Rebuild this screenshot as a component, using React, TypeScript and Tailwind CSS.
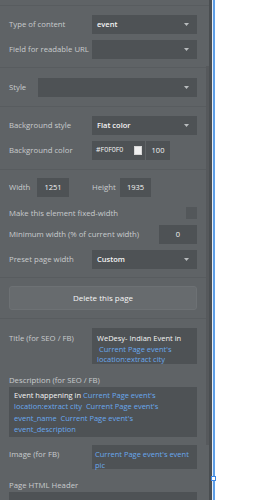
import React from 'react'

function Arrow() {
  return (
    <svg width="5" height="3" viewBox="0 0 5 3" className="shrink-0">
      <path d="M0 0 H5 L2.5 3 Z" fill="#b9bcbe" />
    </svg>
  )
}

function Select({ value, className = '' }: { value?: string; className?: string }) {
  return (
    <div className={`flex h-[19px] items-center justify-between bg-[#4e5255] pl-[5px] pr-[8px] ${className}`}>
      <span className="text-[7.5px] font-semibold text-[#f4f4f4]">{value}</span>
      <Arrow />
    </div>
  )
}

function Label({ children, className = '' }: { children: React.ReactNode; className?: string }) {
  return <span className={`whitespace-nowrap text-[7.75px] leading-[11px] text-[#c8cbcd] ${className}`}>{children}</span>
}

function Row({ label, children }: { label: string; children: React.ReactNode }) {
  return (
    <div className="flex h-[19px] items-center">
      <Label className="w-[83px] shrink-0">{label}</Label>
      <div className="flex-1">{children}</div>
    </div>
  )
}

const blue = 'text-[#69a8ee]'

export default function App() {
  return (
    <div className="flex h-[500px] w-[270px] overflow-hidden bg-white font-['Open_Sans',sans-serif]">
      {/* Property panel */}
      <div className="relative flex w-[209px] shrink-0 flex-col bg-[#5f6366]">
        {/* scrollbar */}
        <div className="absolute right-0 top-[66px] h-[379px] w-[3px] bg-[#56595c]" />

        <div className="h-[6px] shrink-0 border-b border-[#585c5f]" />

        {/* Data */}
        <div className="flex shrink-0 flex-col gap-[6px] border-b border-[#585c5f] pb-[8px] pl-[9px] pr-[12px] pt-[9px]">
          <Row label="Type of content">
            <Select value="event" />
          </Row>
          <Row label="Field for readable URL">
            <Select />
          </Row>
        </div>

        {/* Style */}
        <div className="flex shrink-0 items-center border-b border-[#585c5f] pb-[9px] pl-[9px] pr-[12px] pt-[10px]">
          <Label className="w-[29px] shrink-0">Style</Label>
          <Select className="flex-1" />
        </div>

        {/* Background */}
        <div className="flex shrink-0 flex-col gap-[6px] border-b border-[#585c5f] pb-[9px] pl-[9px] pr-[12px] pt-[9px]">
          <Row label="Background style">
            <Select value="Flat color" />
          </Row>
          <Row label="Background color">
            <div className="flex h-[19px] gap-px">
              <div className="flex w-[53px] items-center justify-between bg-[#4e5255] pl-[4px] pr-[3px]">
                <span className="text-[7px] font-medium text-[#f4f4f4]">#F0F0F0</span>
                <span className="h-[9px] w-[8px] border border-[#d6d6d6] bg-[#f0f0f0]" />
              </div>
              <div className="flex w-[24px] items-center justify-center bg-[#4e5255]">
                <span className="text-[7.5px] font-medium text-[#f4f4f4]">100</span>
              </div>
            </div>
          </Row>
        </div>

        {/* Size */}
        <div className="flex shrink-0 flex-col border-b border-[#585c5f] pb-[8px] pl-[9px] pr-[12px] pt-[8px]">
          <div className="flex h-[19px] items-center">
            <Label className="w-[28px] shrink-0">Width</Label>
            <div className="flex h-[19px] w-[32px] items-center justify-center bg-[#4e5255]">
              <span className="text-[7.5px] font-medium text-[#f4f4f4]">1251</span>
            </div>
            <Label className="ml-[23px] w-[28px] shrink-0">Height</Label>
            <div className="flex h-[19px] w-[31px] items-center justify-center bg-[#4e5255]">
              <span className="text-[7.5px] font-medium text-[#f4f4f4]">1935</span>
            </div>
          </div>
          <div className="mt-[10px] flex h-[12px] items-center justify-between">
            <Label>Make this element fixed-width</Label>
            <span className="h-[12px] w-[11px] bg-[#53575a]" />
          </div>
          <div className="mt-[6px] flex h-[19px] items-center justify-between">
            <Label>Minimum width (% of current width)</Label>
            <div className="flex h-[19px] w-[38px] items-center justify-center bg-[#4e5255]">
              <span className="text-[7.5px] font-medium text-[#f4f4f4]">0</span>
            </div>
          </div>
          <div className="mt-[6px]">
            <Row label="Preset page width">
              <Select value="Custom" />
            </Row>
          </div>
        </div>

        {/* Delete */}
        <div className="shrink-0 border-b border-[#585c5f] pb-[8px] pl-[9px] pr-[12px] pt-[8px]">
          <button className="flex h-[24px] w-full items-center justify-center rounded-[3px] border border-[#6d7174] bg-[#676b6e]">
            <span className="text-[8px] font-medium text-[#f6f6f6]">Delete this page</span>
          </button>
        </div>

        {/* SEO */}
        <div className="flex flex-col pl-[9px] pr-[12px] pt-[9px]">
          <div className="flex items-start">
            <Label className="w-[83px] shrink-0 pt-[4.5px]">Title (for SEO / FB)</Label>
            <div className="h-[36px] flex-1 bg-[#4e5255] px-[5px] pt-[5px] text-[7.5px] font-medium leading-[10.5px]">
              <div className="text-[#f4f4f4]">WeDesy- Indian Event in</div>
              <div className={`${blue} pl-[2px]`}>Current Page event's</div>
              <div className={blue}>location:extract city</div>
            </div>
          </div>

          <Label className="mt-[11px] block">Description (for SEO / FB)</Label>
          <div className="mt-px h-[50px] bg-[#4e5255] px-[5px] pt-[3px] text-[7.5px] font-medium leading-[11.3px]">
            <div>
              <span className="text-[#f4f4f4]">Event happening in </span>
              <span className={blue}>Current Page event's</span>
            </div>
            <div className={blue}>location:extract city&nbsp; Current Page event's</div>
            <div className={blue}>event_name&nbsp; Current Page event's</div>
            <div className={blue}>event_description</div>
          </div>

          <div className="mt-[8px] flex items-start">
            <Label className="w-[83px] shrink-0 pt-[3.5px]">Image (for FB)</Label>
            <div className={`h-[24px] flex-1 bg-[#4e5255] px-[3px] pt-[3.5px] text-[7.5px] font-medium leading-[11px] ${blue}`}>
              <div>Current Page event's event</div>
              <div>pic</div>
            </div>
          </div>

          <Label className="mt-[11px] block">Page HTML Header</Label>
          <div className="mt-px h-[40px] bg-[#4e5255]" />
        </div>
      </div>

      {/* Panel edge */}
      <div className="w-[3px] shrink-0 bg-[#4a4e51]" />
      <div className="w-px shrink-0 bg-[#e6edf5]" />
      <div className="relative w-[2px] shrink-0 bg-[#5d9ee6]">
        <span className="absolute left-[-2px] top-[476px] h-[5px] w-[5px] border border-[#3d86e0] bg-white" />
      </div>
      <div className="flex-1 bg-white" />
    </div>
  )
}
